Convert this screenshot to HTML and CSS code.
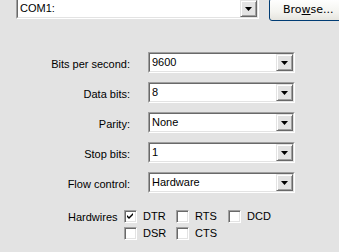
FILE: index.html
```html
<!DOCTYPE html>
<html>
<head>
<meta charset="utf-8">
<link rel="stylesheet" href="styles.css">
</head>
<body>
<div class="page">
  <div class="top-row">
    <div class="combo combo-wide">
      <div class="combo-inner">
        <span class="val">COM1:</span>
        <span class="drop"><svg width="7" height="4" viewBox="0 0 7 4"><polygon points="0,0 7,0 3.5,4" fill="#000"/></svg></span>
      </div>
    </div>
    <button class="browse">Bro<u>w</u>se...</button>
  </div>

  <div class="form">
    <label class="lbl">Bits per second:</label>
    <div class="combo"><div class="combo-inner"><span class="val">9600</span><span class="drop"><svg width="7" height="4" viewBox="0 0 7 4"><polygon points="0,0 7,0 3.5,4" fill="#000"/></svg></span></div></div>

    <label class="lbl">Data bits:</label>
    <div class="combo"><div class="combo-inner"><span class="val">8</span><span class="drop"><svg width="7" height="4" viewBox="0 0 7 4"><polygon points="0,0 7,0 3.5,4" fill="#000"/></svg></span></div></div>

    <label class="lbl">Parity:</label>
    <div class="combo"><div class="combo-inner"><span class="val">None</span><span class="drop"><svg width="7" height="4" viewBox="0 0 7 4"><polygon points="0,0 7,0 3.5,4" fill="#000"/></svg></span></div></div>

    <label class="lbl">Stop bits:</label>
    <div class="combo"><div class="combo-inner"><span class="val">1</span><span class="drop"><svg width="7" height="4" viewBox="0 0 7 4"><polygon points="0,0 7,0 3.5,4" fill="#000"/></svg></span></div></div>

    <label class="lbl">Flow control:</label>
    <div class="combo"><div class="combo-inner"><span class="val">Hardware</span><span class="drop"><svg width="7" height="4" viewBox="0 0 7 4"><polygon points="0,0 7,0 3.5,4" fill="#000"/></svg></span></div></div>
  </div>

  <div class="hw">
    <span class="hw-label">Hardwires</span>
    <div class="hw-grid">
      <div class="chk"><span class="box"><svg width="7" height="7" viewBox="0 0 7 7"><path d="M0,2 L2,4 L6,0 L6,2 L2,6 L0,4 Z" fill="#000"/></svg></span><span>DTR</span></div>
      <div class="chk"><span class="box"></span><span>RTS</span></div>
      <div class="chk"><span class="box"></span><span>DCD</span></div>
      <div class="chk"><span class="box"></span><span>DSR</span></div>
      <div class="chk"><span class="box"></span><span>CTS</span></div>
    </div>
  </div>
</div>
</body>
</html>
```

FILE: styles.css
```css
html, body {
  margin: 0;
  padding: 0;
  background: #e3e3e3;
  overflow: hidden;
}
body {
  width: 339px;
  height: 252px;
  font-family: "Liberation Sans", Arial, sans-serif;
  font-size: 11px;
  color: #000;
}
.page {
  display: flex;
  flex-direction: column;
}
.top-row {
  display: flex;
  align-items: flex-start;
  margin-top: -2px;
  padding-left: 16px;
  gap: 10px;
  overflow: hidden;
}
.combo {
  box-sizing: border-box;
  height: 21px;
  border: 1px solid;
  border-color: #a0a0a0 #ffffff #ffffff #a0a0a0;
  background: #fff;
}
.combo-wide {
  width: 243px;
  flex: none;
}
.combo-inner {
  box-sizing: border-box;
  height: 19px;
  border: 1px solid;
  border-color: #696969 #e3e3e3 #e3e3e3 #696969;
  display: flex;
  align-items: center;
}
.val {
  flex: 1;
  padding-left: 2px;
  line-height: 17px;
  white-space: nowrap;
}
.drop {
  box-sizing: border-box;
  width: 17px;
  height: 17px;
  flex: none;
  background: #e3e3e3;
  border: 1px solid;
  border-color: #e3e3e3 #696969 #696969 #e3e3e3;
  box-shadow: inset 1px 1px #ffffff, inset -1px -1px #a0a0a0;
  display: flex;
  align-items: center;
  justify-content: center;
}
.drop svg {
  display: block;
  margin-top: 1px;
}
.browse {
  box-sizing: border-box;
  width: 75px;
  height: 23px;
  border: 1px solid #003c74;
  border-radius: 3px;
  background: linear-gradient(#ffffff, #f4f4f0 60%, #e6e5df);
  font-family: "DejaVu Sans", "Liberation Sans", sans-serif;
  font-size: 11px;
  color: #000;
  padding: 0 0 0 13px;
  text-align: left;
  flex: none;
}
.form {
  display: grid;
  grid-template-columns: 130px 147px;
  column-gap: 18px;
  row-gap: 9px;
  grid-auto-rows: 21px;
  margin-top: 31px;
}
.lbl {
  text-align: right;
  align-self: center;
  padding-top: 2px;
}
.hw {
  display: flex;
  align-items: flex-start;
  margin-top: 17px;
  padding-left: 68px;
}
.hw-label {
  width: 48px;
  line-height: 13px;
  padding-top: 1px;
}
.hw-grid {
  margin-left: 8px;
  display: grid;
  grid-template-columns: repeat(3, 52px);
  row-gap: 4px;
  grid-auto-rows: 13px;
}
.chk {
  display: flex;
  align-items: center;
  gap: 6px;
  line-height: 13px;
}
.box {
  box-sizing: border-box;
  width: 13px;
  height: 13px;
  border: 1px solid;
  border-color: #a0a0a0 #ffffff #ffffff #a0a0a0;
  background: #fff;
  box-shadow: inset 1px 1px #696969, inset -1px -1px #e3e3e3;
  display: flex;
  align-items: center;
  justify-content: center;
  flex: none;
}
.box svg {
  display: block;
}
```
